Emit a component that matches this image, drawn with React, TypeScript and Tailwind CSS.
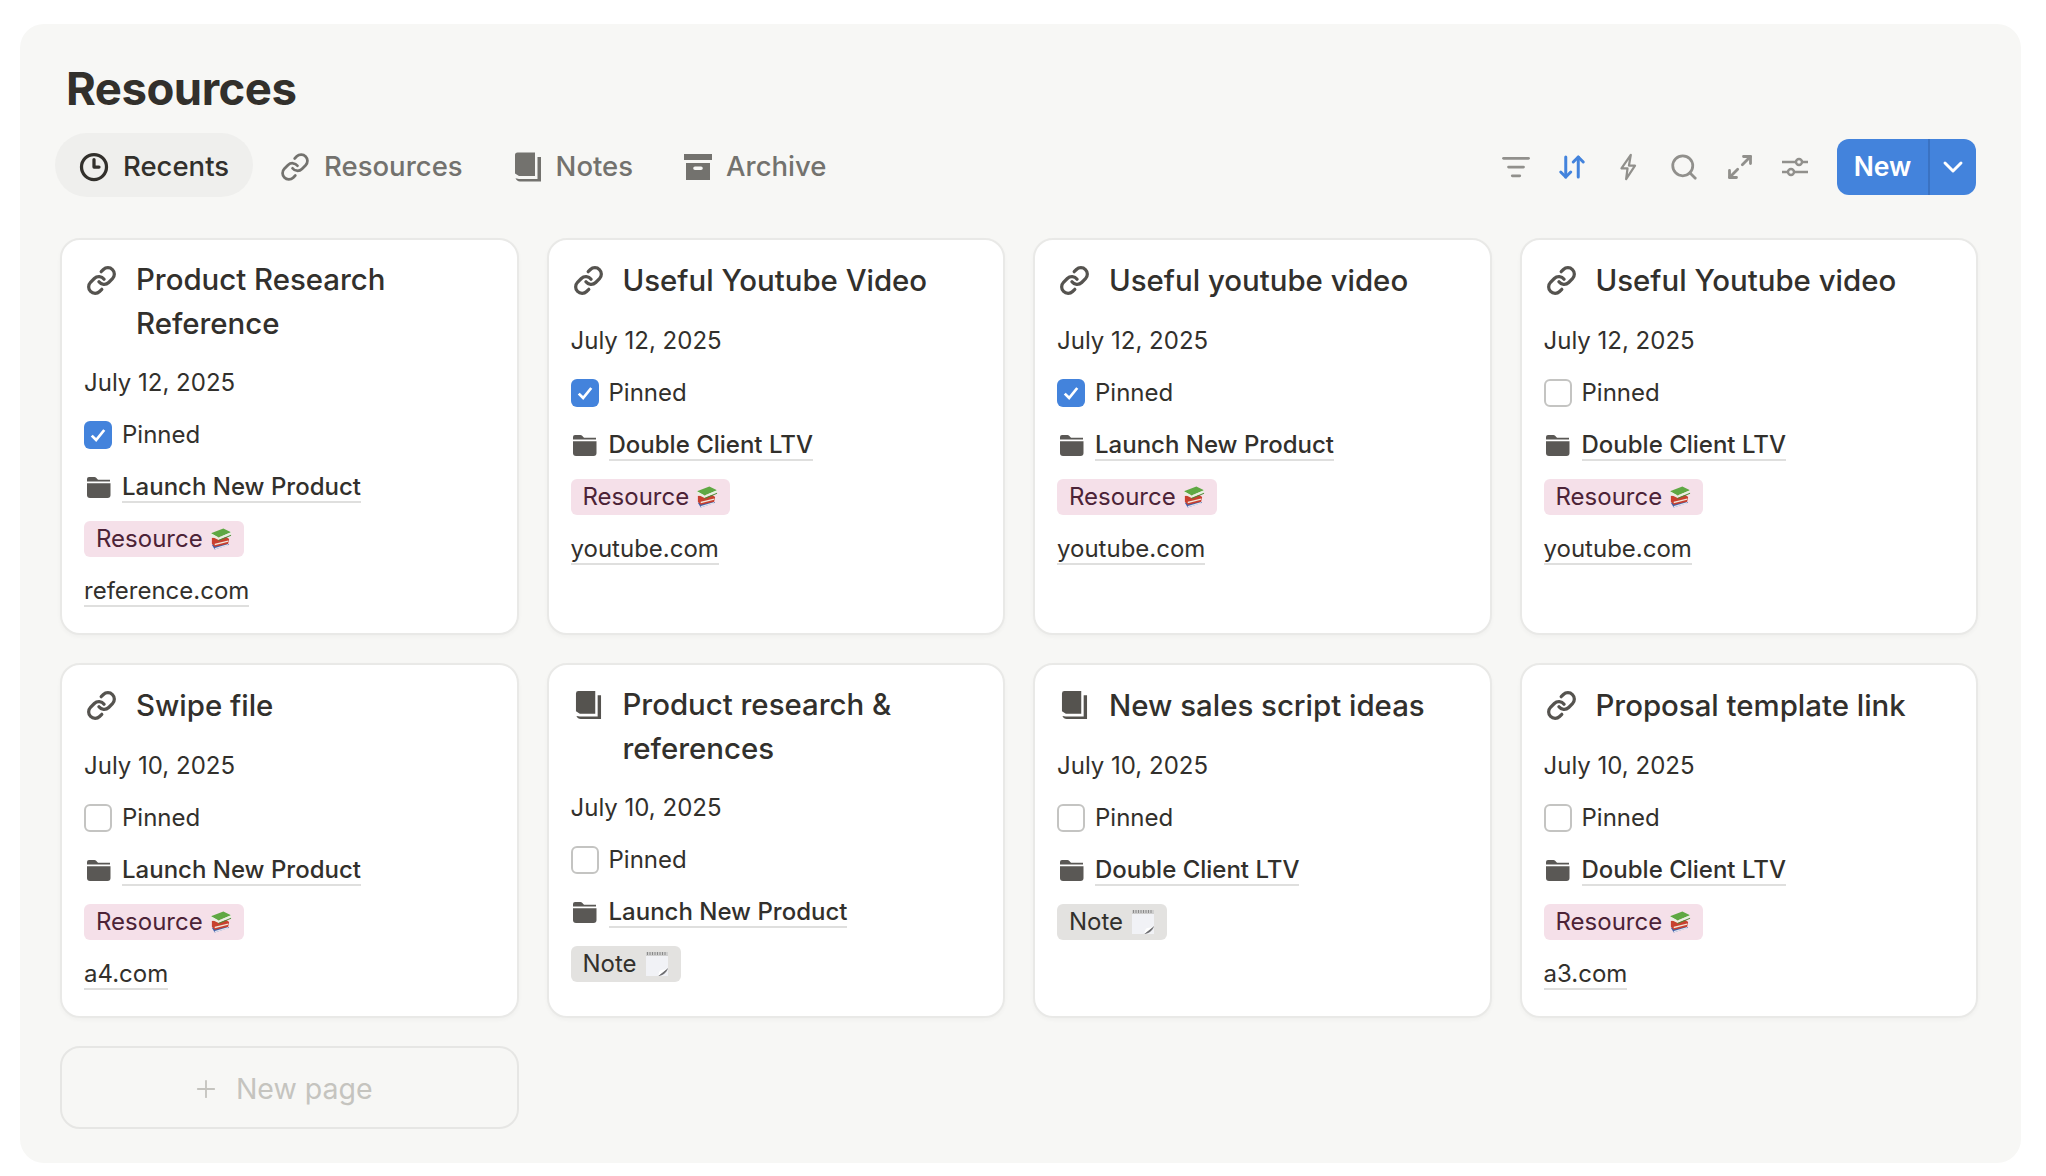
import { ArrowDownUp, ChevronDown, Clock3, Link, ListFilter, Maximize2, Plus, Search } from "lucide-react";

type Page = {
  title: string;
  kind: "link" | "note";
  date: string;
  pinned: boolean;
  project: string;
  tag: "Resource" | "Note";
  url?: string;
};

const pages: Page[] = [
  { title: "Product Research Reference", kind: "link", date: "July 12, 2025", pinned: true, project: "Launch New Product", tag: "Resource", url: "reference.com" },
  { title: "Useful Youtube Video", kind: "link", date: "July 12, 2025", pinned: true, project: "Double Client LTV", tag: "Resource", url: "youtube.com" },
  { title: "Useful youtube video", kind: "link", date: "July 12, 2025", pinned: true, project: "Launch New Product", tag: "Resource", url: "youtube.com" },
  { title: "Useful Youtube video", kind: "link", date: "July 12, 2025", pinned: false, project: "Double Client LTV", tag: "Resource", url: "youtube.com" },
  { title: "Swipe file", kind: "link", date: "July 10, 2025", pinned: false, project: "Launch New Product", tag: "Resource", url: "a4.com" },
  { title: "Product research & references", kind: "note", date: "July 10, 2025", pinned: false, project: "Launch New Product", tag: "Note" },
  { title: "New sales script ideas", kind: "note", date: "July 10, 2025", pinned: false, project: "Double Client LTV", tag: "Note" },
  { title: "Proposal template link", kind: "link", date: "July 10, 2025", pinned: false, project: "Double Client LTV", tag: "Resource", url: "a3.com" },
];

const NotesIcon = ({ className }: { className?: string }) => (
  <svg viewBox="0 0 28 30" className={className} fill="currentColor">
    <path d="M1 3a2.500 2.500 0 0 1 2.500-2.500H21V24H5L1 21.500Z" />
    <path d="M23.500 5h3.500v24.500H6a5 5 0 0 1-4.500-3.200L5 27H23.500Z" />
  </svg>
);

const ArchiveIcon = ({ className }: { className?: string }) => (
  <svg viewBox="0 0 28 28" className={className} fill="currentColor">
    <rect x="0" y="1" width="28" height="6" />
    <path fillRule="evenodd" d="M2 10h24v17H2Zm9 3.500a1.800 1.800 0 0 0 0 3.600h6a1.800 1.800 0 0 0 0-3.600Z" />
  </svg>
);

const FolderIcon = () => (
  <svg viewBox="0 0 25 22" className="h-[22px] w-[25px] text-[#5a5855]" fill="currentColor">
    <path d="M1 3a2 2 0 0 1 2-2h5.500a2 2 0 0 1 1.400.6l1.600 1.600c.4.4.9.6 1.400.6H24v1.700H1Z" />
    <path d="M1 7.200h23.500V19a3 3 0 0 1-3 3H4a3 3 0 0 1-3-3Z" />
  </svg>
);

const SlidersIcon = ({ className }: { className?: string }) => (
  <svg viewBox="0 0 28 24" className={className} fill="none" stroke="currentColor" strokeWidth="2.4">
    <path d="M1 7h14M21 7h6M1 17h6M13 17h14" />
    <circle cx="18" cy="7" r="3" />
    <circle cx="10" cy="17" r="3" />
  </svg>
);

const BoltIcon = ({ className }: { className?: string }) => (
  <svg viewBox="0 0 20 30" className={className} fill="none" stroke="currentColor" strokeWidth="2.4" strokeLinejoin="round">
    <path d="M13 2 3 16.500h6.500L8 28 17.500 13.500H11Z" />
  </svg>
);

const BooksEmoji = () => (
  <svg viewBox="0 0 24 24" className="h-[24px] w-[23px]">
    <path d="M3 18l15-3 3 3-15 5Z" fill="#3f5fa8" />
    <path d="M6 21.500l14-4.200v1.500l-14 4.200Z" fill="#dfe3ee" />
    <path d="M3 11l14-2 4 3-1 5-14 3-3-3Z" fill="#c8402f" />
    <path d="M6 17l14-3.500v1.400l-14 3.500Z" fill="#f2e6da" />
    <path d="M2 6l13-5 8 4-13 5.500Z" fill="#5fa843" />
    <path d="M10 10.500l13-5.500v2.500l-13 5.500-8-4V6Z" fill="#e9efe2" />
    <path d="M10 13l13-5.500v1l-13 5.500Z" fill="#4a8a35" />
  </svg>
);

const NoteEmoji = () => (
  <svg viewBox="0 0 24 26" className="h-[26px] w-[24px]">
    <rect x="1" y="3" width="22" height="22" fill="#f1f2f6" />
    <rect x="1" y="1" width="22" height="4" fill="#cfcfcf" />
    <path d="M2.500 1v3M5 1v3M7.500 1v3M10 1v3M12.500 1v3M15 1v3M17.500 1v3M20 1v3" stroke="#8a8a8a" strokeWidth="1" />
    <path d="M13 25l10-8c-1 4-5 8-10 8Z" fill="#6f6f72" />
    <path d="M13 25c1-3 1-5 3-6 3 0 5-1 7-2l-10 8Z" fill="#ffffff" />
  </svg>
);

const tabs = [
  { label: "Recents", icon: <Clock3 className="h-[30px] w-[30px]" strokeWidth={2.6} />, active: true },
  { label: "Resources", icon: <Link className="h-[32px] w-[30px]" strokeWidth={2.2} />, active: false },
  { label: "Notes", icon: <NotesIcon className="h-[30px] w-[28px]" />, active: false },
  { label: "Archive", icon: <ArchiveIcon className="h-[28px] w-[28px]" />, active: false },
];

const Card = ({ page }: { page: Page }) => (
  <div className="rounded-[20px] border-2 border-[#e9e9e7] bg-white px-[22px] pt-[18px] pb-[16px] shadow-[0_2px_4px_rgba(0,0,0,0.03)]">
    <div className="mb-[11px] flex gap-[19px]">
      <div className="flex h-[44px] w-[33px] shrink-0 items-center justify-center pl-[2px] text-[#55534f]">
        {page.kind === "link" ? <Link className="h-[33px] w-[33px]" strokeWidth={2.5} /> : <NotesIcon className="h-[30px] w-[27px]" />}
      </div>
      <div className="flex min-h-[46px] items-center text-[29.4px] leading-[44px] font-medium text-[#32302c]">{page.title}</div>
    </div>
    <div className="flex h-[52px] items-center text-[24px] text-[#32302c]">{page.date}</div>
    <div className="flex h-[52px] items-center gap-[10px] text-[24px] text-[#32302c]">
      {page.pinned ? (
        <span className="flex h-[28px] w-[28px] items-center justify-center rounded-[6px] bg-[#4383dc]">
          <svg viewBox="0 0 16 16" className="h-[20px] w-[20px]" fill="none" stroke="white" strokeWidth="2.2">
            <path d="M3 8.500l3.500 3.500L13 4" />
          </svg>
        </span>
      ) : (
        <span className="h-[28px] w-[28px] rounded-[6px] border-2 border-[#c4c4c2] bg-white" />
      )}
      Pinned
    </div>
    <div className="flex h-[52px] items-center gap-[10px] text-[24px] text-[#32302c]">
      <span className="flex w-[28px] justify-center"><FolderIcon /></span>
      <span className="mt-[2px] border-b-2 border-[#dfdfde] leading-[28px] font-medium">{page.project}</span>
    </div>
    <div className="flex h-[52px] items-center">
      {page.tag === "Resource" ? (
        <span className="flex h-[36px] items-center gap-[6px] rounded-[6px] bg-[#f5e0e9] px-[12px] text-[24px] text-[#4c2337]">
          Resource <BooksEmoji />
        </span>
      ) : (
        <span className="flex h-[36px] items-center gap-[8px] rounded-[6px] bg-[#e3e2e0] px-[12px] text-[24px] text-[#32302c]">
          Note <NoteEmoji />
        </span>
      )}
    </div>
    {page.url && (
      <div className="flex h-[52px] items-center text-[24px] text-[#32302c]">
        <span className="mt-[2px] border-b-2 border-[#dfdfde] leading-[28px]">{page.url}</span>
      </div>
    )}
  </div>
);

export default function App() {
  return (
    <div className="h-[1176px] bg-white pt-[24px] pl-[20px]">
      <div className="h-[1139px] w-[2001px] rounded-[24px] bg-[#f7f7f5] pt-[36px] pr-[43px] pl-[40px] font-['Inter',sans-serif]">
        <h1 className="ml-[6px] text-[45.5px] leading-[58px] font-bold tracking-[-0.5px] text-[#32302c]">Resources</h1>
        <div className="mt-[15px] flex items-center justify-between">
          <div className="-ml-[5px] flex gap-[3px]">
            {tabs.map((tab) => (
              <div
                key={tab.label}
                className={`flex h-[64px] items-center gap-[14px] rounded-full px-[24px] pt-[4px] text-[27.5px] font-medium ${tab.active ? "bg-[#efefed] text-[#32302c]" : "text-[#73726e]"}`}
              >
                {tab.icon}
                {tab.label}
              </div>
            ))}
          </div>
          <div className="mt-[4px] mr-[2px] flex items-center">
            <ListFilter className="mx-[13px] h-[30px] w-[30px] text-[#91908c]" strokeWidth={2.2} />
            <ArrowDownUp className="mx-[13px] h-[30px] w-[30px] text-[#4383dc]" strokeWidth={2.4} />
            <BoltIcon className="mx-[13px] h-[28px] w-[30px] text-[#91908c]" />
            <Search className="mx-[13px] h-[32px] w-[30px] text-[#91908c]" strokeWidth={2.2} />
            <Maximize2 className="mx-[13px] h-[28px] w-[30px] text-[#91908c]" strokeWidth={2.4} />
            <SlidersIcon className="mx-[13px] h-[24px] w-[28px] text-[#91908c]" />
            <div className="ml-[15px] flex h-[56px] w-[139px] overflow-hidden rounded-[12px] bg-[#4383dc] text-white">
              <div className="flex w-[91px] items-center justify-center text-[26.5px] font-semibold">New</div>
              <div className="flex flex-1 items-center justify-center border-l-2 border-[#3a72c2]">
                <ChevronDown className="h-[32px] w-[32px]" strokeWidth={2.2} />
              </div>
            </div>
          </div>
        </div>
        <div className="mt-[41px] grid grid-cols-4 gap-x-[28px] gap-y-[28px]">
          {pages.map((page) => (
            <Card key={page.title} page={page} />
          ))}
          <div className="flex h-[83px] items-center justify-center gap-[16px] rounded-[20px] border-2 border-[#e6e6e4] pt-[3px] pr-[14px] text-[28.5px] text-[#c5c4bf]">
            <Plus className="h-[28px] w-[28px]" strokeWidth={1.6} />
            New page
          </div>
        </div>
      </div>
    </div>
  );
}
